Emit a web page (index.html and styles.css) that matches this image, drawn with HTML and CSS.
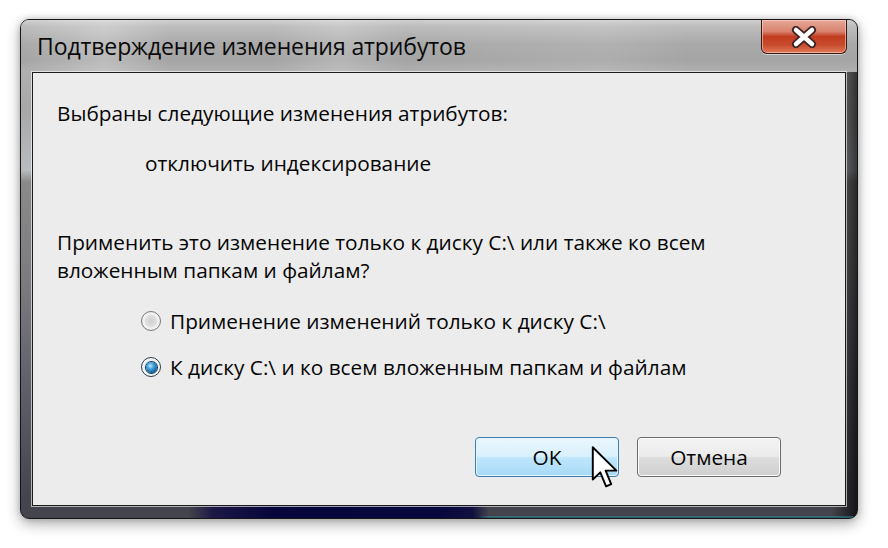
FILE: index.html
```html
<!DOCTYPE html>
<html lang="ru">
<head>
<meta charset="utf-8">
<title>Подтверждение изменения атрибутов</title>
<link rel="stylesheet" href="styles.css">
</head>
<body>
<div class="window">
  <div class="titlebar">
    <span class="title">Подтверждение изменения атрибутов</span>
    <div class="close">
      <svg width="28" height="22" viewBox="0 0 28 22">
        <path d="M6 4 L22 18 M22 4 L6 18" stroke="#3a2424" stroke-width="8" stroke-linecap="round"/>
        <path d="M6 4 L22 18 M22 4 L6 18" stroke="#ffffff" stroke-width="4.5" stroke-linecap="round"/>
      </svg>
    </div>
  </div>
  <div class="client">
    <p class="line">Выбраны следующие изменения атрибутов:</p>
    <p class="line indent">отключить индексирование</p>
    <p class="question">Применить это изменение только к диску C:\ или также ко всем<br>вложенным папкам и файлам?</p>
    <div class="options">
      <div class="opt"><span class="radio"></span><span>Применение изменений только к диску C:\</span></div>
      <div class="opt"><span class="radio checked"><span class="dot"></span></span><span>К диску C:\ и ко всем вложенным папкам и файлам</span></div>
    </div>
    <div class="buttons">
      <div class="btn ok">OK
        <svg class="cursor" width="28" height="42" viewBox="0 0 12.6 19.6">
          <polygon points="0.6,0.6 0.6,15.6 4.1,12.3 6.8,18.8 9.2,17.8 6.6,11.5 11.6,11.5" fill="#ffffff" stroke="#000000" stroke-width="0.9" stroke-linejoin="round"/>
        </svg>
      </div>
      <div class="btn">Отмена</div>
    </div>
  </div>
</div>
</body>
</html>
```

FILE: styles.css
```css
* { box-sizing: border-box; }
html, body { margin: 0; padding: 0; }
body {
  width: 888px;
  height: 548px;
  background: #ffffff;
  padding: 19px 0 0 20px;
  font-family: "Open Sans", "Noto Sans", sans-serif;
  color: #050505;
  overflow: hidden;
}
.window {
  width: 838px;
  height: 500px;
  border: 1px solid #161616;
  border-radius: 9px;
  display: flex;
  flex-direction: column;
  box-shadow: 0 5px 14px rgba(0,0,0,0.32), 0 0 6px rgba(0,0,0,0.18);
  background:
    linear-gradient(to right, transparent 20%, #1c1846 23%, #07063c 30%, #08073e 50%, #101040 54%, transparent 56%) left bottom / 100% 13px no-repeat,
    linear-gradient(to bottom, transparent 0, transparent 70%, #3a9aaa 82%, #12303c 100%) right bottom / 45% 6px no-repeat,
    linear-gradient(to right, rgba(0,0,0,0) 0%, rgba(0,0,0,0) 97%, rgba(20,20,24,0.55) 98.6%, rgba(0,0,0,0.7) 100%),
    linear-gradient(to bottom, #d4d4d4 0px, #b4b4b4 30px, #a8a8a8 90px, #b8bcc0 150px, #8a8a8a 162px, #7c7c80 260px, #5c5c66 380px, #44444c 480px);
  overflow: hidden;
}
.titlebar {
  height: 52px;
  flex: none;
  display: flex;
  justify-content: space-between;
  align-items: flex-start;
  padding: 0 10px 0 16px;
  background:
    linear-gradient(to right, rgba(255,255,255,0) 0%, rgba(255,255,255,0.25) 10%, rgba(255,255,255,0) 18%, rgba(255,255,255,0) 30%, rgba(255,255,255,0.18) 38%, rgba(255,255,255,0) 46%, rgba(255,255,255,0.1) 70%, rgba(255,255,255,0) 80%),
    linear-gradient(to bottom, #d0d0d0 0px, #bdbdbd 6px, #a9a9a9 24px, #a4a4a4 40px, #b0b0b0 52px);
}
.title {
  font-size: 23px;
  line-height: 28px;
  padding-top: 12px;
  color: #0a0a0a;
  letter-spacing: -0.1px;
}
.close {
  width: 86px;
  height: 34px;
  border: 1px solid #3b1a14;
  border-top: none;
  border-radius: 0 0 6px 6px;
  background: linear-gradient(to bottom, #e8a898 0%, #d8826e 35%, #c23c20 50%, #c84a2c 75%, #e07a5c 100%);
  box-shadow: inset 0 0 0 1px rgba(255,220,210,0.55), 0 1px 0 rgba(255,255,255,0.5);
  display: flex;
  align-items: center;
  justify-content: center;
}
.client {
  flex: 1;
  margin: 0 11px 12px 11px;
  background: #ececec;
  border: 1px solid #1c1c1c;
  box-shadow: 0 0 0 1px rgba(255,255,255,0.6);
  padding: 26px 0 0 24px;
  font-size: 20.8px;
  line-height: 28px;
  display: flex;
  flex-direction: column;
}
p { margin: 0; }
.line + .line { margin-top: 22px; }
.indent { padding-left: 88px; }
.question { margin-top: 51px; }
.options {
  margin-top: 23px;
  padding-left: 84px;
  display: flex;
  flex-direction: column;
  gap: 18px;
}
.opt {
  display: flex;
  align-items: center;
  gap: 9px;
  height: 28px;
}
.radio {
  width: 20px;
  height: 20px;
  border-radius: 50%;
  border: 1px solid #7a7a7a;
  background: radial-gradient(circle at 50% 50%, #d0d0d0 0, #e0e0e0 45%, #f6f6f6 55%, #c0c0c0 100%);
  box-shadow: inset 0 0 0 2px #f0f0f0;
  display: flex;
  align-items: center;
  justify-content: center;
  flex: none;
}
.radio.checked {
  border-color: #2a3a4a;
  background: #e8eef2;
  box-shadow: inset 0 0 0 1px #ffffff;
}
.dot {
  width: 11px;
  height: 11px;
  border-radius: 50%;
  background: radial-gradient(circle at 40% 35%, #bfe6ff 0, #3aa0e0 35%, #15588a 75%, #0c2c48 100%);
  box-shadow: 0 0 0 1px #0f3a5c;
}
.buttons {
  margin-top: 56px;
  display: flex;
  justify-content: flex-end;
  gap: 18px;
  padding-right: 64px;
}
.btn {
  position: relative;
  width: 144px;
  height: 40px;
  border: 1px solid #6c6c6c;
  border-radius: 4px;
  background: linear-gradient(to bottom, #f4f4f4 0%, #ebebeb 48%, #dddddd 52%, #cfcfcf 100%);
  box-shadow: inset 0 0 0 1px #fafafa;
  display: flex;
  align-items: center;
  justify-content: center;
  font-size: 20.8px;
  color: #050505;
}
.btn.ok {
  border-color: #3c7fb1;
  background: linear-gradient(to bottom, #eaf6fd 0%, #d9f0fc 48%, #bee6fd 52%, #a7d9f5 100%);
  box-shadow: inset 0 0 0 1px #e6f5fd;
}
.cursor {
  position: absolute;
  left: 115px;
  top: 8px;
}
```
